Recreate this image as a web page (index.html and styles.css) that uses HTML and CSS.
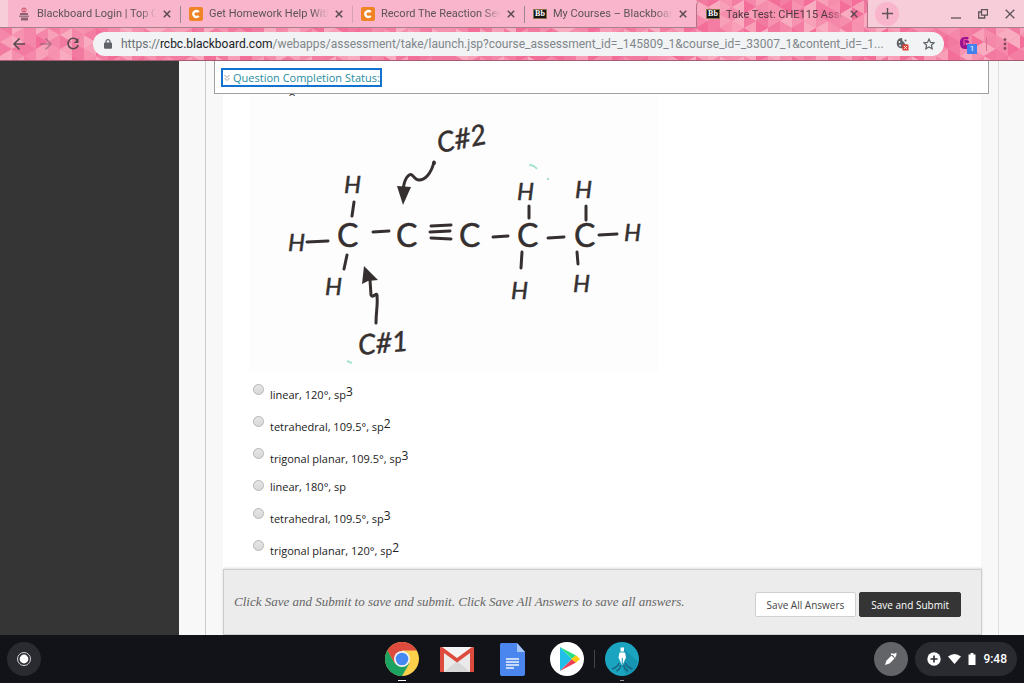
FILE: index.html
```html
<!DOCTYPE html>
<html lang="en">
<head>
<meta charset="utf-8">
<title>Take Test: CHE115 Assignment</title>
<link rel="stylesheet" href="styles.css">
</head>
<body>
<header class="browser">
  <svg class="mosaic" id="mosaic" aria-hidden="true"></svg>
  <div class="strip">
    <div class="edge"></div>
    <div class="tab">
      <svg class="fav" viewBox="0 0 14 14"><circle cx="7" cy="3" r="2.6" fill="#d2607a"/><rect x="3" y="6" width="8" height="2" fill="#8d6475"/><rect x="2" y="8.500" width="10" height="1.500" fill="#a07485"/><rect x="4" y="10.500" width="7" height="3" fill="#8d6475"/><path d="M5 3h4" stroke="#f4b4c4"/></svg>
      <span class="title">Blackboard Login | Top Co</span>
      <button class="x" aria-label="Close tab"><svg viewBox="0 0 8 8"><path d="M.8.8l6.400 6.400M7.200.8L.8 7.200"/></svg></button>
    </div>
    <div class="tab">
      <svg class="fav" viewBox="0 0 14 14"><rect width="14" height="14" rx="2" fill="#f08324"/><path d="M9.800 5A3.200 2.900 0 1 0 9.800 9" fill="none" stroke="#fff" stroke-width="2.400"/></svg>
      <span class="title">Get Homework Help With</span>
      <button class="x" aria-label="Close tab"><svg viewBox="0 0 8 8"><path d="M.8.8l6.400 6.400M7.200.8L.8 7.200"/></svg></button>
    </div>
    <div class="tab faint">
      <svg class="fav" viewBox="0 0 14 14"><rect width="14" height="14" rx="2" fill="#f08324"/><path d="M9.800 5A3.200 2.900 0 1 0 9.800 9" fill="none" stroke="#fff" stroke-width="2.400"/></svg>
      <span class="title">Record The Reaction Seen</span>
      <button class="x" aria-label="Close tab"><svg viewBox="0 0 8 8"><path d="M.8.8l6.400 6.400M7.200.8L.8 7.200"/></svg></button>
    </div>
    <div class="tab">
      <span class="fav bb">Bb</span>
      <span class="title">My Courses – Blackboard</span>
      <button class="x" aria-label="Close tab"><svg viewBox="0 0 8 8"><path d="M.8.8l6.400 6.400M7.200.8L.8 7.200"/></svg></button>
    </div>
    <div class="tab active">
      <span class="fav bb">Bb</span>
      <span class="title">Take Test: CHE115 Assig</span>
      <button class="x" aria-label="Close tab"><svg viewBox="0 0 8 8"><path d="M.8.8l6.400 6.400M7.200.8L.8 7.200"/></svg></button>
    </div>
    <div class="window">
      <button class="new" aria-label="New tab"><svg viewBox="0 0 11 11"><path d="M5.500 0v11M0 5.500h11"/></svg></button>
      <div class="winbtns">
        <button aria-label="Minimize"><svg viewBox="0 0 10 10"><path d="M0 9h10"/></svg></button>
        <button aria-label="Restore"><svg viewBox="0 0 10 10"><path d="M3.500.7h6v5.500h-6zM3.500 3H.7v6h6V6.500"/></svg></button>
        <button aria-label="Close"><svg viewBox="0 0 10 10"><path d="M.7.7l8.600 8.600M9.300.7L.7 9.300"/></svg></button>
      </div>
    </div>
  </div>
  <nav class="toolbar">
    <button class="nav" aria-label="Back"><svg viewBox="0 0 14 14"><path d="M13 7H2M7.500 1.500L2 7l5.500 5.500"/></svg></button>
    <button class="nav dim" aria-label="Forward"><svg viewBox="0 0 14 14"><path d="M1 7h11M6.500 1.500L12 7l-5.500 5.500"/></svg></button>
    <button class="nav" aria-label="Reload"><svg viewBox="0 0 14 14"><path d="M11.500 3.500A5.200 5.200 0 1 0 12.200 8"/><path d="M12.500 1v5h-5z" fill="#5a4a52" stroke="none"/></svg></button>
    <div class="omnibox">
      <svg class="lock" viewBox="0 0 8 10"><rect y="3.500" width="8" height="6.200" rx="1" fill="#5f6368"/><path d="M2 4V2.600a2 2 0 0 1 4 0V4" fill="none" stroke="#5f6368" stroke-width="1.200"/></svg>
      <div class="url"><span class="scheme">https://</span><span class="host">rcbc.blackboard.com</span>/webapps/assessment/take/launch.jsp?course_assessment_id=_145809_1&amp;course_id=_33007_1&amp;content_id=_1...</div>
      <svg class="cookie" viewBox="0 0 13 13"><path d="M6 0a5.200 5.200 0 1 0 5 6.500L9 6 8 4 6.500 3z" fill="#5f6368"/><circle cx="3.500" cy="4" r=".9" fill="#f1f3f4"/><circle cx="4" cy="7.500" r=".9" fill="#f1f3f4"/><circle cx="9.500" cy="2.500" r="1" fill="#5f6368"/><rect x="6.500" y="6.500" width="6" height="6" rx=".6" fill="#dd4237"/><path d="M8.200 8.200l2.600 2.600M10.800 8.200l-2.600 2.600" stroke="#fff"/></svg>
      <svg class="star" viewBox="0 0 12 12"><path d="M6 1l1.500 3.400 3.600.4-2.700 2.400.8 3.600L6 9l-3.200 1.800.8-3.600L.9 4.800l3.600-.4z"/></svg>
    </div>
    <div class="tools">
      <div class="ext"><svg viewBox="0 0 10 12"><path d="M5 0C1 0 0 3 0 6s1 6 5 6h4V8H6V6h3V4l-2-1 2-2-1-1z" fill="#9b1290"/><path d="M4 2.500h3M4 6h2M4 2.500v6" stroke="#ec4f9d" stroke-width="1.200"/></svg><span class="badge">1</span></div>
      <span class="rule"></span>
      <button class="menu" aria-label="Menu"><svg viewBox="0 0 4 12"><g fill="#824c5f"><circle cx="2" cy="1.600" r="1.400"/><circle cx="2" cy="6" r="1.400"/><circle cx="2" cy="10.400" r="1.400"/></g></svg></button>
    </div>
  </nav>
</header>

<main class="view">
  <aside class="side"></aside>
  <section class="panel">
    <div class="status">
      <button class="toggle"><svg viewBox="0 0 6 8"><path d="M.5 1L3 3.500 5.500 1M.5 4L3 6.500 5.500 4"/></svg>Question Completion Status:</button>
    </div>
    <form class="question">
      <p class="cut">g</p>
      <svg class="figure" viewBox="0 0 410 276" role="img" aria-label="Molecule diagram">
        <rect width="410" height="276" fill="#fefdfd"/>
        <g class="c">
          <text x="88" y="151">C</text><text x="147" y="151">C</text><text x="210" y="151">C</text><text x="268" y="151">C</text><text x="325" y="151">C</text>
        </g>
        <g class="h">
          <text x="95" y="97">H</text><text x="39" y="155">H</text><text x="76" y="199">H</text>
          <text x="268" y="104">H</text><text x="326" y="102">H</text><text x="375" y="145">H</text>
          <text x="262" y="203">H</text><text x="324" y="196">H</text>
        </g>
        <text class="note" transform="rotate(-11 190 57)" x="190" y="57">C#2</text>
        <text class="note" transform="rotate(-5 110 259)" x="110" y="259">C#1</text>
        <g class="bonds">
          <path d="M105 106l-2 14M58 146l21-1M98 159l-3 14M124 136l16-1M182 130l20-1M181 136l20-1M182 142l20 1M244 141l15-1M280 110v12M273 156l-1 16M299 142l16-1M337 110v14M328 156l1 12M350 139l18-1"/>
          <path d="M185 66C182 78 176 84 170 84 164 84 164 75 159 80 155 84 155 88 154 94"/>
          <path d="M127 227C127 216 129 208 128 200 128 195 124 203 122 199L121 184"/>
        </g>
        <path d="M148 90l6 19 8-18z" class="head"/><path d="M115 170l-2 18 6-3 10-1z" class="head"/><circle cx="185" cy="67" r="2" class="head"/>
        <path d="M280 69q5 0 8 4M98 265l5 2" stroke="#a9e4cc" stroke-width="2" fill="none"/><circle cx="299" cy="83" r="1" fill="#8ccdb7"/>
      </svg>
      <div class="option"><input type="radio" name="a" id="a1"><label for="a1">linear, 120°, sp<sup>3</sup></label></div>
      <div class="option"><input type="radio" name="a" id="a2"><label for="a2">tetrahedral, 109.5°, sp<sup>2</sup></label></div>
      <div class="option"><input type="radio" name="a" id="a3"><label for="a3">trigonal planar, 109.5°, sp<sup>3</sup></label></div>
      <div class="option plain"><input type="radio" name="a" id="a4"><label for="a4">linear, 180°, sp</label></div>
      <div class="option"><input type="radio" name="a" id="a5"><label for="a5">tetrahedral, 109.5°, sp<sup>3</sup></label></div>
      <div class="option"><input type="radio" name="a" id="a6"><label for="a6">trigonal planar, 120°, sp<sup>2</sup></label></div>
    </form>
    <footer class="submit">
      <p>Click Save and Submit to save and submit. Click Save All Answers to save all answers.</p>
      <button class="btn">Save All Answers</button>
      <button class="btn dark">Save and Submit</button>
    </footer>
  </section>
  <div class="gutter"></div>
</main>

<div class="shelf">
  <button class="launcher" aria-label="Launcher"><svg viewBox="0 0 34 34"><circle cx="17" cy="17" r="6.500" fill="none" stroke="#d5d5d8"/><circle cx="17" cy="17" r="4.400" fill="#fff"/></svg></button>
  <div class="apps">
    <button class="app open" aria-label="Chrome"><svg viewBox="0 0 34 34"><circle cx="17" cy="17" r="17" fill="#fcd04b"/><path d="M2.300 8.500A17 17 0 0 1 31.700 8.500H17L9.600 21.200z" fill="#dc4b3e"/><path d="M2.300 8.500A17 17 0 0 0 17 34L24.400 21.200 9.600 21.200z" fill="#1ca261"/><circle cx="17" cy="17" r="8" fill="#f4f4f4"/><circle cx="17" cy="17" r="6.300" fill="#4688f1"/></svg></button>
    <button class="app" aria-label="Gmail"><svg viewBox="0 0 34 34"><rect y="5" width="34" height="25" rx="2" fill="#eaeaea"/><path d="M4 30L17 19l13 11z" fill="#d8d8d8"/><path d="M4 8l13 12L30 8v-3H4z" fill="#f3f3f3"/><path d="M0 30V7q0-2 2-2l15 11L32 5q2 0 2 2v23h-4V11L17 20.500 4 11v19z" fill="#dd4b3e"/></svg></button>
    <button class="app" aria-label="Docs"><svg viewBox="0 0 34 34"><path d="M6.500 1H22l8 9v22q0 2-2 2H6.500q-1.500 0-1.500-2V2.500Q5 1 6.500 1z" fill="#4a86ed"/><path d="M22 1l8 9h-8z" fill="#a6c5fa"/><path d="M11 17h13M11 20h13M11 23h13M11 26h8" stroke="#f1f5fd" stroke-width="1.600"/></svg></button>
    <button class="app" aria-label="Play Store"><svg viewBox="0 0 34 34"><circle cx="17" cy="17" r="17" fill="#fff"/><path d="M10 5v24l12-12z" fill="#21bfe8"/><path d="M10 5l16 8.500L22 17z" fill="#29df83"/><path d="M10 29l16-8.500L22 17z" fill="#ee3e56"/><path d="M26 13.200l4 3.800-4 3.800-5-3.800z" fill="#fdca12"/></svg></button>
    <span class="split"></span>
    <button class="app open small" aria-label="Squid"><svg viewBox="0 0 34 34"><circle cx="17" cy="17" r="17" fill="#1ba4c0"/><path d="M19 7l14 13a17 17 0 0 1-12 13l-4-9z" fill="#1695b2"/><path d="M15.500 5.500h3.500v4h-3.500zM14.500 10.500h5.500l1 5-3.200 7h-1.100l-3.200-7z" fill="#fff"/><path d="M17.250 22.500V16" stroke="#1695b2"/><path d="M14 21q-1 4-7 6M15.500 23q0 4-4 6M20.500 21q1 4 7 6M19 23q0 4 4 6" stroke="#17607f" stroke-width="1.400" fill="none"/></svg></button>
  </div>
  <div class="tray">
    <button class="stylus" aria-label="Stylus"><svg viewBox="0 0 34 34"><path d="M11 23l1.500-4.500 5-5 3 3-5 5zM18.500 12.500l2.500-1 1.500 1.500-1.500 3z" fill="#fff"/><path d="M17 12l3 .5M21 12l1.500-.5" stroke="#fff" stroke-width="1.500"/></svg></button>
    <div class="pill">
      <svg width="14" height="14" viewBox="0 0 14 14"><circle cx="7" cy="7" r="6.700" fill="#fff"/><path d="M7 3.500v7M3.500 7h7" stroke="#2a2b31" stroke-width="1.600"/></svg>
      <svg width="13" height="10" viewBox="0 0 13 10"><path d="M0 2.500Q6.500-2.500 13 2.500L6.500 10z" fill="#fff"/></svg>
      <svg width="8" height="12" viewBox="0 0 8 12"><path d="M.5 1.500H2.500V0h3v1.500h2V12h-7z" fill="#fff"/></svg>
      <span class="clock">9:48</span>
    </div>
  </div>
</div>
<script src="mosaic.js"></script>
</body>
</html>
```
FILE: styles.css
```css
* { box-sizing: border-box; }
body { margin: 0; height: 100vh; display: flex; flex-direction: column; overflow: hidden; font-family: "Open Sans", sans-serif; font-size: 11px; color: #222; }
button { margin: 0; padding: 0; border: 0; background: none; font: inherit; color: inherit; }
svg { display: block; }
p { margin: 0; }

.browser { position: relative; flex: none; overflow: hidden; background: #f47fa4; border-bottom: 1px solid #a45c74; font-family: Roboto, sans-serif; }
.mosaic { position: absolute; inset: 0; width: 1920px; height: 62px; }
.strip { position: relative; display: flex; height: 28px; }
.edge { flex: none; width: 8px; background: #f6cdd9; border-bottom: 1px solid #a8808e; }
.tab { flex: 0 1 172px; min-width: 0; display: flex; align-items: center; padding: 0 9px; background: #f8b5cb; border-bottom: 1px solid #a8808e; font-size: 11px; color: #5d5358; position: relative; }
.tab + .tab:not(.active)::before { content: ""; position: absolute; left: 0; top: 6px; width: 1px; height: 17px; background: #9c8790; }
.tab.faint::before { opacity: .4; }
.tab.active { background: none; border: 1px solid #b5708a; border-width: 0 1px; border-radius: 6px 6px 0 0; color: #4e3a43; }
.fav { flex: none; width: 14px; height: 14px; margin-right: 6px; }
.bb { height: 10px; background: #151515; border: 1px solid #8b744c; color: #fff; font: bold 8px/8px "Liberation Serif", serif; text-align: center; }
.title { flex: 1; overflow: hidden; white-space: nowrap; -webkit-mask-image: linear-gradient(90deg, #000 84%, transparent 98%); mask-image: linear-gradient(90deg, #000 84%, transparent 98%); }
.x { margin-left: 4px; }
.x svg { width: 8px; height: 8px; stroke: #5a4a52; stroke-width: 1.5; }
.window { flex: 1; display: flex; align-items: center; justify-content: space-between; padding: 0 9px 0 7px; background: #f6cdd9; border-bottom: 1px solid #a8808e; }
.new { display: grid; place-items: center; width: 24px; height: 24px; border-radius: 50%; background: #f8b5cb; }
.new svg { width: 11px; height: 11px; stroke: #5d5358; stroke-width: 1.4; }
.winbtns { display: flex; gap: 17px; }
.winbtns svg { width: 10px; height: 10px; fill: none; stroke: #5d5358; stroke-width: 1.3; }

.toolbar { position: relative; display: flex; align-items: center; height: 32px; padding: 0 17px 0 12px; }
.nav { margin-right: 13px; }
.nav svg { width: 14px; height: 14px; fill: none; stroke: #5a4a52; stroke-width: 1.6; }
.dim { opacity: .4; }
.omnibox { flex: 1; min-width: 0; display: flex; align-items: center; height: 24px; padding: 0 9px 0 11px; border-radius: 12px; background: #f1f3f4; }
.lock { width: 8px; height: 10px; margin-right: 9px; }
.url { flex: 1; min-width: 0; overflow: hidden; white-space: nowrap; font-size: 12px; color: #80868b; }
.scheme { color: #6a6f74; }
.host { color: #202124; }
.cookie { width: 13px; height: 13px; margin-right: 14px; }
.star { width: 12px; height: 12px; fill: none; stroke: #5f6368; stroke-width: 1.2; }
.tools { flex: none; display: flex; align-items: center; padding-left: 16px; }
.ext { position: relative; width: 17px; height: 14px; }
.ext svg { width: 10px; height: 12px; }
.badge { position: absolute; left: 7px; top: 7px; width: 10px; height: 10px; background: #3f82ee; color: #fff; font-size: 8px; line-height: 10px; text-align: center; }
.rule { width: 1px; height: 14px; margin: 0 16px 0 9px; background: #dc7191; }
.menu svg { width: 4px; height: 12px; }

.view { flex: 1; min-height: 0; display: flex; background: #f8f8f8; }
.side { flex: none; width: 179px; background: #353535; }
.panel { flex: 1; min-width: 0; display: flex; flex-direction: column; margin-left: 26px; padding: 0 9px 0 8px; border: 1px solid #ccc; border-width: 0 1px; border-right-color: #ddd; }
.gutter { flex: none; width: 25px; }
.status { flex: none; padding: 7px 6px 6px; background: #fff; border: 1px solid #a0a0a0; border-top: 0; }
.toggle { display: flex; align-items: center; gap: 3px; height: 19px; border: 2px solid #1173cf; font-size: 11px; color: #278c9f; }
.toggle svg { width: 6px; height: 8px; margin-left: 1px; fill: none; stroke: #999; }
.question { flex: 1; min-height: 0; overflow: hidden; margin: 0 8px 0 9px; padding-left: 30px; background: #fff; }
.cut { display: flex; align-items: flex-end; height: 2px; margin-left: 36px; overflow: hidden; line-height: 10px; }
.figure { width: 410px; height: 276px; margin: 0 0 12px -4px; }
.figure text { fill: #35302f; stroke: #35302f; stroke-width: .5; font-family: Lato, sans-serif; }
.c text { font-size: 32px; }
.h text { font-size: 24px; font-style: italic; }
.figure .note { font-size: 28px; font-style: italic; }
.bonds { fill: none; stroke: #35302f; stroke-width: 3; stroke-linecap: round; stroke-linejoin: round; }
.head { fill: #35302f; }
.option { display: flex; align-items: flex-start; gap: 6px; height: 32px; line-height: 22px; }
.option input { appearance: none; width: 11px; height: 11px; margin: 0; border: 1px solid #b5b5b5; border-radius: 50%; background: linear-gradient(#e6e6e6, #d8d8d8); }
.option sup { font-size: 12px; line-height: 0; vertical-align: 3px; }
.plain { height: 28px; line-height: 14px; }
.submit { flex: none; display: flex; align-items: center; gap: 3px; margin: 0 7px 0 9px; padding: 22px 20px 17px 10px; background: #ececec; border: 1px solid #ccc; box-shadow: 0 -1px 2px #ddd; }
.submit p { flex: 1; font: italic 13px/18px "Liberation Serif", serif; color: #666; padding-bottom: 5px; }
.btn { height: 25px; padding: 0 11px; border: 1px solid #d0d0d0; border-radius: 2px; background: #fff; font-size: 10px; color: #444; }
.btn.dark { background: #353535; border-color: #353535; color: #fff; }

.shelf { flex: none; display: grid; grid-template-columns: 1fr auto 1fr; align-items: center; height: 48px; padding: 0 7px; background: #121318; }
.launcher { justify-self: start; width: 34px; height: 34px; border-radius: 50%; background: #2a2b31; }
.apps { display: flex; align-items: center; gap: 21px; }
.app { position: relative; }
.app svg { width: 34px; height: 34px; }
.app.open::after { content: ""; position: absolute; left: 13px; bottom: -5px; width: 8px; height: 1px; background: #fff; }
.app.small::after { left: 15px; width: 4px; background: #999; }
.split { width: 1px; height: 18px; margin: 0 -11px; background: #44454b; }
.tray { justify-self: end; display: flex; gap: 7px; }
.stylus { width: 34px; height: 34px; border-radius: 50%; background: #636468; }
.pill { display: flex; align-items: center; gap: 7px; height: 34px; padding: 0 10px 0 12px; border-radius: 17px; background: #2a2b31; color: #fff; font: 500 12px Roboto, sans-serif; }
```
FILE: mosaic.js
```js
// Fills the browser frame with a triangular pink mosaic.
const svg = document.getElementById("mosaic");
const tones = ["#f36e99", "#f47da3", "#f587aa", "#f792b0", "#f8a0b8", "#f9acc0", "#f27aa0", "#f58dac"];
const W = 12, H = 14;
let seed = 7;
const next = () => (seed = (seed * 16807) % 2147483647) / 2147483647;
let out = "";
for (let c = 0; c < 160; c++) {
  const x = c * W, shift = c % 2 ? H / 2 : 0;
  for (let y = -H + shift; y < 70; y += H) {
    const a = tones[Math.floor(next() * tones.length)];
    const b = tones[Math.floor(next() * tones.length)];
    out += `<polygon points="${x},${y} ${x},${y + H} ${x + W},${y + H / 2}" fill="${a}"/>`;
    out += `<polygon points="${x + W},${y - H / 2} ${x + W},${y + H / 2} ${x},${y}" fill="${b}"/>`;
  }
}
svg.innerHTML = out;
```
